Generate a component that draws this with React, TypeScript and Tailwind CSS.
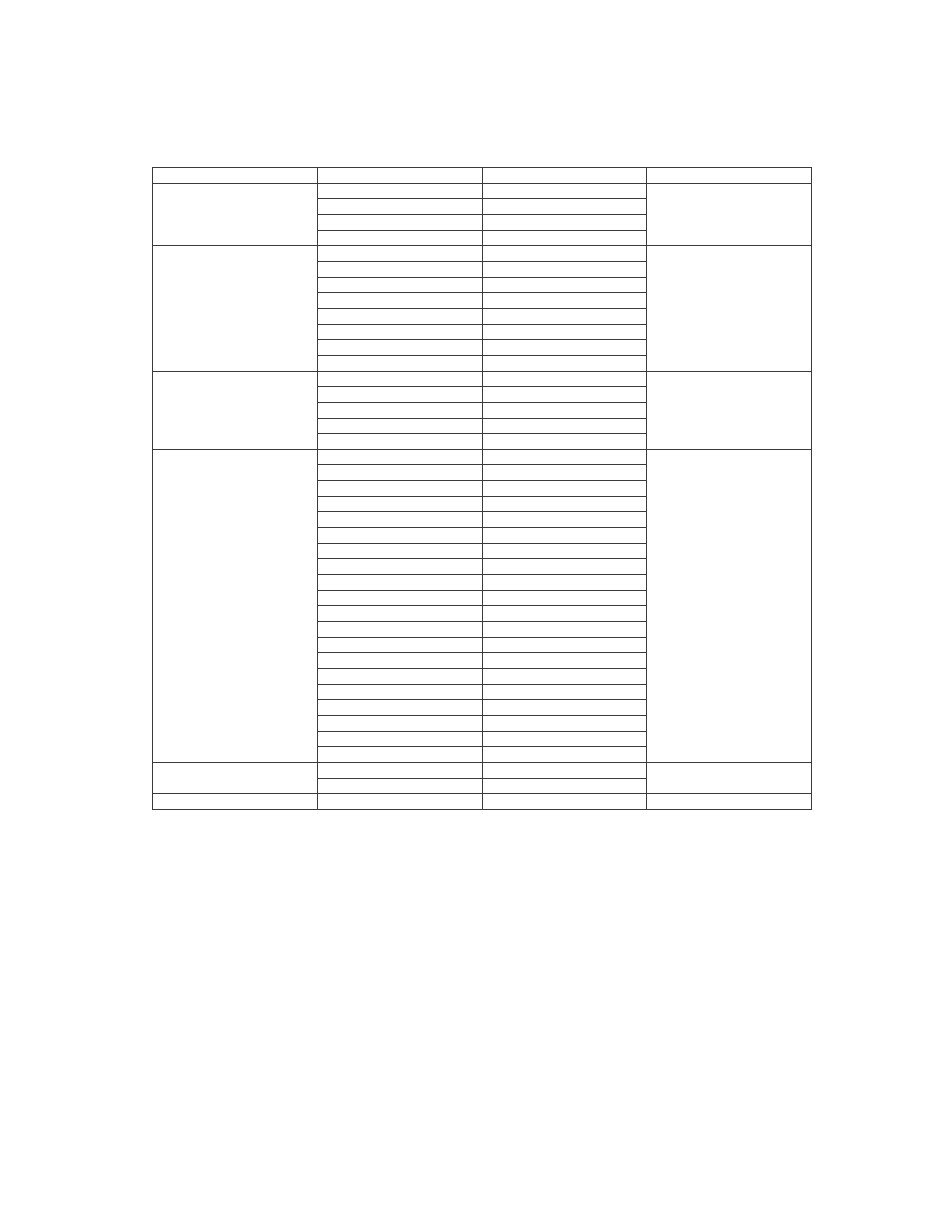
const groups = [4, 8, 5, 20, 2, 1]

export default function App() {
  return (
    <div className="min-h-[1210px] w-[935px] bg-white pt-[167px] pl-[152px]">
      <table className="w-[660px] table-fixed border-collapse">
        <tbody>
          <tr className="h-[15.66px]">
            {[0, 1, 2, 3].map((c) => (
              <td key={c} className="border border-[#3a3a3a] p-0" />
            ))}
          </tr>
          {groups.map((count, g) =>
            Array.from({ length: count }).map((_, r) => (
              <tr key={`${g}-${r}`} className="h-[15.66px]">
                {r === 0 && <td rowSpan={count} className="border border-[#3a3a3a] p-0" />}
                <td className="border border-[#3a3a3a] p-0" />
                <td className="border border-[#3a3a3a] p-0" />
                {r === 0 && <td rowSpan={count} className="border border-[#3a3a3a] p-0" />}
              </tr>
            ))
          )}
        </tbody>
      </table>
    </div>
  )
}
